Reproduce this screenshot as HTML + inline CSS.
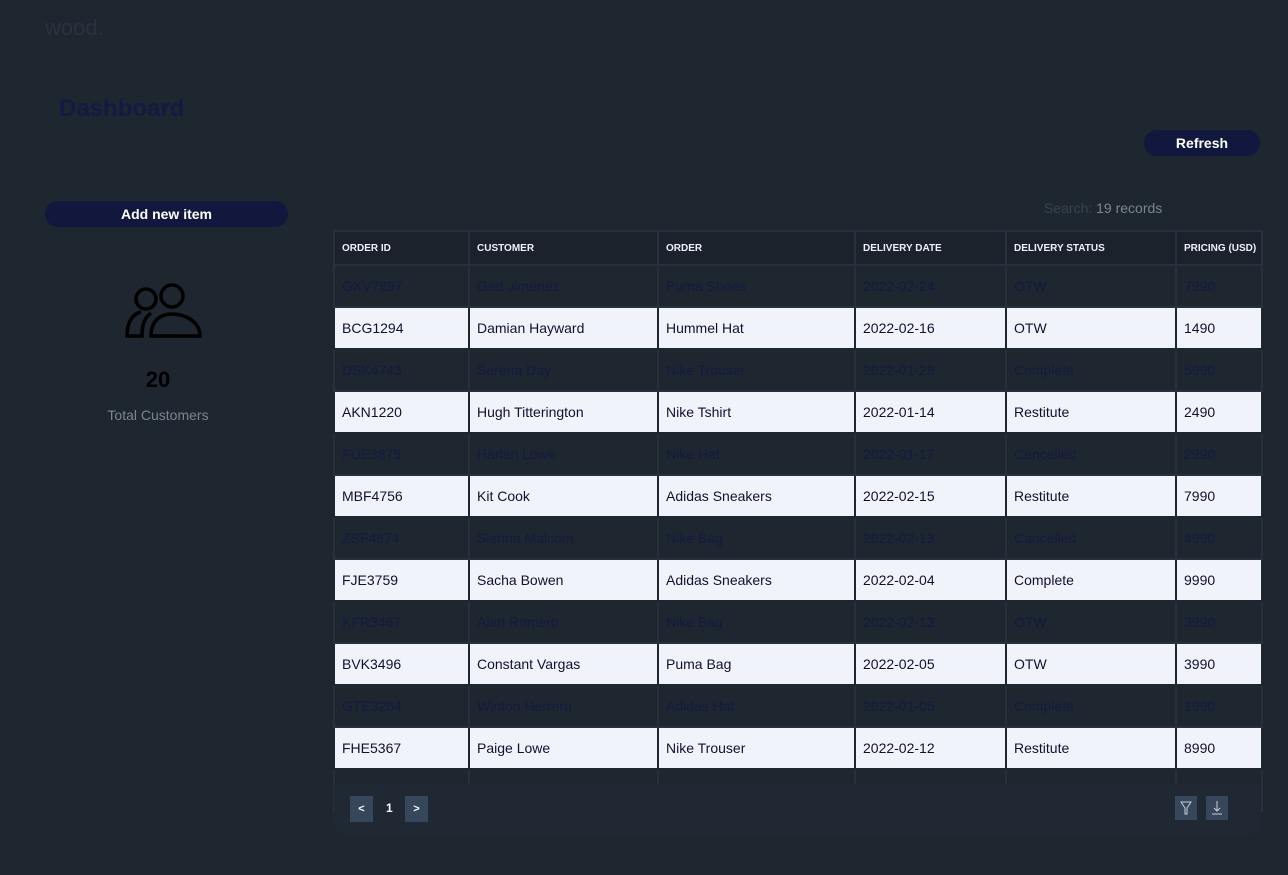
<!DOCTYPE html>
<html><head><style>
body{margin:0;width:1288px;height:875px;background:#1e2630;font-family:"Liberation Sans",Arial,sans-serif;position:relative;overflow:hidden}
.abs{position:absolute}
.logo{left:45px;top:15px;font-size:22px;color:#29323e}
.title{left:59px;top:95px;font-size:24px;font-weight:bold;color:#141a44}
.btn{background:#12173d;color:#fff;font-weight:bold;font-size:14px;text-align:center;border-radius:14px}
table{position:absolute;left:333px;top:230px;border-collapse:collapse;width:928px;table-layout:fixed}
td,th{border:2px solid #27303b;padding:0 0 0 7px;text-align:left;font-size:14px;height:40px;white-space:nowrap;overflow:hidden}
th{background:#1b222b;color:#eef;font-size:10px;font-weight:bold;height:32px}
tr.d td{color:#151a42;background:#1e2630}
tr.w td{background:#f0f4fa;color:#0d1230;border-color:#1e2630}
.foot{left:334px;top:784px;width:926px;height:50px;background:#202833;border-radius:0 0 10px 10px}
.pb{width:23px;height:26px;background:#36475c;color:#fff;font-size:11px;text-align:center;line-height:26px;font-weight:bold}
</style></head><body>
<div class="abs logo">wood.</div>
<div class="abs title">Dashboard</div>
<div class="abs btn" style="left:1144px;top:130px;width:116px;height:26px;line-height:26px">Refresh</div>
<div class="abs btn" style="left:45px;top:201px;width:243px;height:26px;line-height:26px">Add new item</div>
<svg class="abs" style="left:124px;top:281px" width="80" height="60" viewBox="0 0 80 60" fill="none" stroke="#000" stroke-width="3.5">
<circle cx="22" cy="18" r="10"/><circle cx="48" cy="15" r="11"/>
<path d="M17 31 C8 33 3 42 3 55 L18 55 C18 45 20 37 27 32"/>
<path d="M27 55 C27 40 36 33 48 33 C60 33 76 40 76 55 Z"/>
</svg>
<div class="abs" style="left:0;width:316px;top:367px;text-align:center;font-size:22px;font-weight:bold;color:#000">20</div>
<div class="abs" style="left:0;width:316px;top:407px;text-align:center;font-size:14px;color:#7b8590">Total Customers</div>
<div class="abs" style="left:1044px;top:200px;font-size:14px;color:#38434f">Search: <span style="color:#7b8590">19 records</span></div>
<table>
<colgroup><col style="width:135px"><col style="width:189px"><col style="width:197px"><col style="width:151px"><col style="width:170px"><col style="width:86px"></colgroup>
<tr><th>ORDER ID</th><th>CUSTOMER</th><th>ORDER</th><th>DELIVERY DATE</th><th>DELIVERY STATUS</th><th>PRICING (USD)</th></tr>
<tr class="d"><td>GXV7897</td><td>Ged Jimenez</td><td>Puma Shoes</td><td>2022-02-24</td><td>OTW</td><td>7990</td></tr>
<tr class="w"><td>BCG1294</td><td>Damian Hayward</td><td>Hummel Hat</td><td>2022-02-16</td><td>OTW</td><td>1490</td></tr>
<tr class="d"><td>DSK4743</td><td>Serena Day</td><td>Nike Trouser</td><td>2022-01-28</td><td>Complete</td><td>5990</td></tr>
<tr class="w"><td>AKN1220</td><td>Hugh Titterington</td><td>Nike Tshirt</td><td>2022-01-14</td><td>Restitute</td><td>2490</td></tr>
<tr class="d"><td>FUE3875</td><td>Harlan Lowe</td><td>Nike Hat</td><td>2022-01-17</td><td>Cancelled</td><td>2990</td></tr>
<tr class="w"><td>MBF4756</td><td>Kit Cook</td><td>Adidas Sneakers</td><td>2022-02-15</td><td>Restitute</td><td>7990</td></tr>
<tr class="d"><td>ZSF4674</td><td>Sienna Malcom</td><td>Nike Bag</td><td>2022-02-13</td><td>Cancelled</td><td>4990</td></tr>
<tr class="w"><td>FJE3759</td><td>Sacha Bowen</td><td>Adidas Sneakers</td><td>2022-02-04</td><td>Complete</td><td>9990</td></tr>
<tr class="d"><td>KFR3467</td><td>Alan Romero</td><td>Nike Bag</td><td>2022-02-13</td><td>OTW</td><td>3990</td></tr>
<tr class="w"><td>BVK3496</td><td>Constant Vargas</td><td>Puma Bag</td><td>2022-02-05</td><td>OTW</td><td>3990</td></tr>
<tr class="d"><td>GTE3264</td><td>Winton Herrera</td><td>Adidas Hat</td><td>2022-01-05</td><td>Complete</td><td>1990</td></tr>
<tr class="w"><td>FHE5367</td><td>Paige Lowe</td><td>Nike Trouser</td><td>2022-02-12</td><td>Restitute</td><td>8990</td></tr>
<tr class="d"><td style="height:12px"></td><td style="height:12px"></td><td></td><td></td><td></td><td></td></tr>
</table>
<div class="abs foot"></div>
<div class="abs pb" style="left:350px;top:796px">&lt;</div>
<div class="abs" style="left:386px;top:801px;color:#fff;font-size:12px;font-weight:bold">1</div>
<div class="abs pb" style="left:405px;top:796px">&gt;</div>
<div class="abs pb" style="left:1175px;top:796px;width:22px;height:24px"><svg width="22" height="24" viewBox="0 0 22 24"><path d="M6 6 H16 L12 12 V18 H10 V12 Z" fill="none" stroke="#ccd" stroke-width="1"/></svg></div>
<div class="abs pb" style="left:1206px;top:796px;width:22px;height:24px"><svg width="22" height="24" viewBox="0 0 22 24"><path d="M11 5 V15 M8 12 L11 15 L14 12 M6 18 H16" fill="none" stroke="#ccd" stroke-width="1"/></svg></div>
</body></html>
